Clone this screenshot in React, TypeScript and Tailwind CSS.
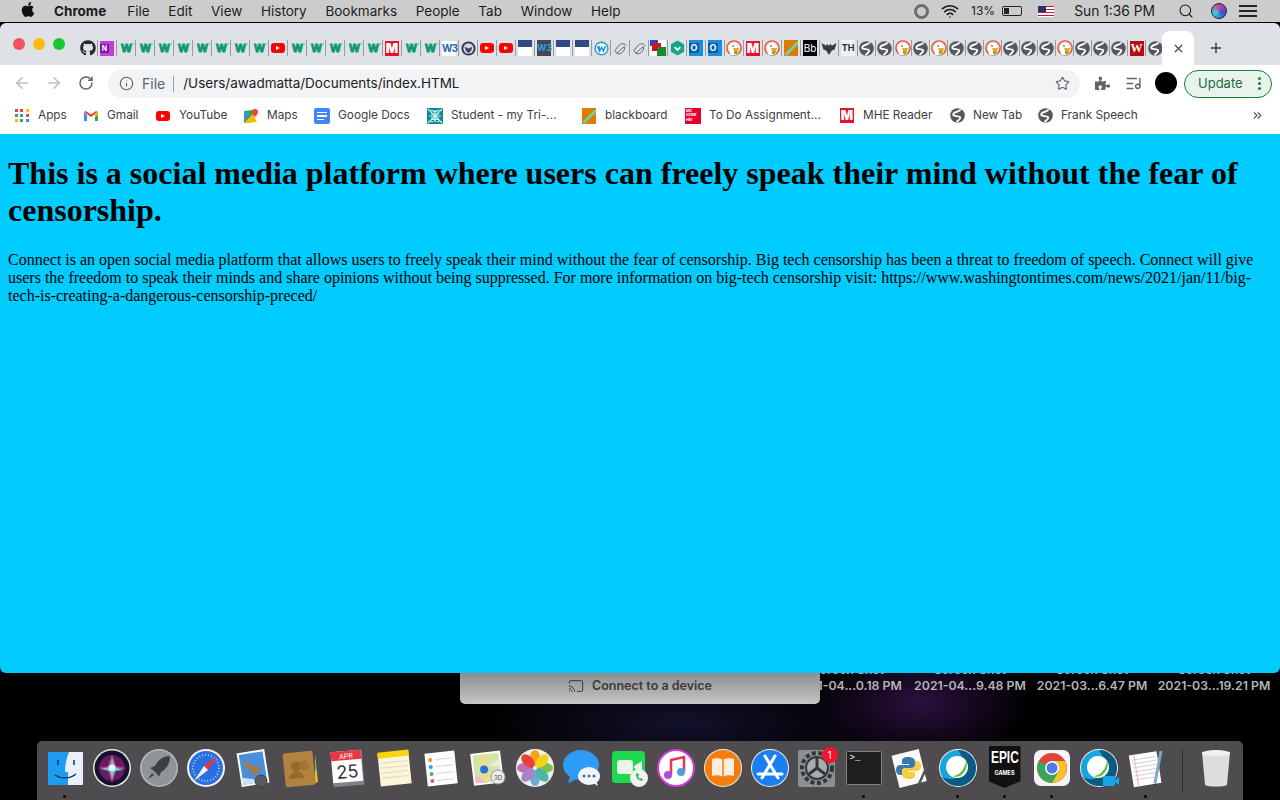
import { ArrowLeft, ArrowRight, Cast, ChevronsRight, Info, ListMusic, Plus, RotateCw, Search, Star, Wifi, X } from "lucide-react";
import { FaApple, FaGithub, FaPuzzlePiece } from "react-icons/fa";

type FaviconKind =
  | "github" | "onenote" | "w" | "yt" | "m" | "w3" | "seal" | "card" | "w3dark" | "wp" | "link"
  | "redbox" | "shield" | "outlook" | "ddg" | "pencil" | "bb" | "bird" | "th" | "globe" | "redw";

const Globe = () => (
  <svg viewBox="0 0 16 16" className="w-[15px] h-[15px]">
    <circle cx="8" cy="8" r="7.8" fill="#55585c" />
    <path d="M11.500 1.500C10 4.500 4.500 3.500 3.500 6.500S9 8 10.500 9.500 9 13 7 15" fill="none" stroke="#fff" strokeWidth="2" />
  </svg>
);

const Duck = () => (
  <svg viewBox="0 0 16 16" className="w-[16px] h-[16px]">
    <circle cx="8" cy="8" r="7.8" fill="#e2502c" />
    <circle cx="8" cy="8" r="6.400" fill="#fbe4dc" />
    <path d="M4 14.500c-1-4-1-7.500 0-9.500s6-3 7-1 1 3 0 5l1 4.500c-3 2-5 2-8 1z" fill="#fff" />
    <circle cx="7" cy="6" r=".8" fill="#234" />
    <path d="M7 8h6l-1 3H8z" fill="#f5a623" />
    <path d="M8 11h4l-1 3H8z" fill="#65bc46" />
  </svg>
);

const Card = () => (
  <div className="w-[14px] h-[16px] bg-white flex flex-col">
    <div className="h-[7px] bg-[#2f4a86]" />
  </div>
);

const Favicon = ({ kind }: { kind: FaviconKind }) => {
  switch (kind) {
    case "github":
      return <FaGithub className="w-[16px] h-[16px] text-[#24292e]" />;
    case "onenote":
      return (
        <div className="w-[14px] h-[15px] bg-[#c43ed6] flex items-center">
          <span className="w-[9px] h-[9px] bg-[#7719aa] text-white text-[7px] font-bold leading-[9px] text-center">N</span>
        </div>
      );
    case "w":
      return (
        <div className="relative w-[15px] h-[16px] flex items-center justify-center">
          <span className="text-[#0c9a6c] text-[11px] leading-[16px] font-black [font-family:'Liberation_Sans',sans-serif] tracking-[-1px] [-webkit-text-stroke:1px_#0c9a6c]">W</span>
          <i className="absolute right-0 top-[3px] w-[2px] h-[2px] bg-[#8fd6b8]" />
        </div>
      );
    case "yt":
      return <div className="w-[14px] h-[10px] rounded-[3px] bg-[#f00] flex items-center justify-center"><div className="w-0 h-0 border-y-[2.5px] border-y-transparent border-l-[4px] border-l-white" /></div>;
    case "m":
      return <div className="w-[14px] h-[15px] bg-[#e8112d] text-white text-[13px] leading-[15px] font-black text-center">M</div>;
    case "w3":
      return <div className="w-[14px] h-[15px] bg-white text-[#2565ae] text-[10px] leading-[15px] font-bold text-center tracking-[-1px]">W3</div>;
    case "seal":
      return (
        <svg viewBox="0 0 16 16" className="w-[15px] h-[15px]">
          <circle cx="8" cy="8" r="7.500" fill="#2c3550" />
          <circle cx="8" cy="8" r="5.500" fill="#d5d8de" />
          <path d="M4 6l4 2 4-2-1 4-3 3-3-3z" fill="#3b4564" />
        </svg>
      );
    case "card":
      return <Card />;
    case "w3dark":
      return <div className="w-[14px] h-[16px] bg-[#3d4a5c] text-[#3f9bd8] text-[9px] leading-[16px] font-bold text-center">W3</div>;
    case "wp":
      return (
        <svg viewBox="0 0 16 16" className="w-[15px] h-[15px]">
          <circle cx="8" cy="8" r="7.500" fill="#1f9ad6" />
          <circle cx="8" cy="8" r="6" fill="#fff" />
          <path d="M3 6l3 7 2-5 2 5 3-8-2 .5-1 3-2-3.500-1 3-1-3z" fill="#1f9ad6" />
        </svg>
      );
    case "link":
      return (
        <svg viewBox="0 0 16 16" className="w-[15px] h-[15px]" fill="none" stroke="#4d6470" strokeWidth="1">
          <path d="M2 10l5-6c2-2 6-1 7 1M4 13l8-7c1 2 0 4-2 6s-4 2-6 1zM2 10c0 1 1 2 2 3" />
        </svg>
      );
    case "redbox":
      return (
        <div className="w-[16px] h-[16px] bg-white relative overflow-hidden">
          <div className="w-[8px] h-[6px] bg-[#2448c4]" />
          <div className="absolute left-[2px] top-[3px] w-[9px] h-[8px] bg-[#d5121e]" />
          <div className="absolute right-0 bottom-0 w-[9px] h-[9px] bg-[#1a8a2e]" />
        </div>
      );
    case "shield":
      return (
        <svg viewBox="0 0 16 16" className="w-[15px] h-[16px]">
          <path d="M8 0l7 4v8l-7 4-7-4V4z" fill="#12a886" />
          <path d="M5 7l3 3 3-3" fill="none" stroke="#fff" strokeWidth="2" />
        </svg>
      );
    case "outlook":
      return (
        <div className="w-[14px] h-[16px] bg-[#1490df] relative">
          <span className="absolute left-0 top-[3px] w-[10px] h-[10px] bg-[#0a5ca8] text-white text-[9px] leading-[10px] font-bold text-center">O</span>
        </div>
      );
    case "ddg":
      return <Duck />;
    case "pencil":
      return (
        <div className="w-[14px] h-[16px] bg-[#e07b00] relative overflow-hidden">
          <div className="absolute left-[-1px] top-[7px] w-[18px] h-[3px] bg-[#6fd0a0] rotate-[-45deg]" />
        </div>
      );
    case "bb":
      return <div className="w-[14px] h-[16px] bg-black text-white text-[10px] leading-[16px] text-center">Bb</div>;
    case "bird":
      return (
        <svg viewBox="0 0 16 16" className="w-[16px] h-[15px]">
          <path d="M0 2l5 3 1-2 2 2 2-2 1 2 5-3-2 7-3 1-3 5-3-5-3-1z" fill="#3a3a3a" />
        </svg>
      );
    case "th":
      return <div className="w-[14px] h-[16px] bg-[#f1f1f1] text-[#2a2a2a] text-[9px] leading-[16px] font-bold text-center">TH</div>;
    case "globe":
      return <Globe />;
    case "redw":
      return <div className="w-[14px] h-[15px] bg-[#b80c0c] text-white text-[12px] leading-[15px] font-bold text-center [font-family:'Liberation_Serif',serif]">W</div>;
  }
};

const leftTabs: FaviconKind[] = [
  "github", "onenote", "w", "w", "w", "w", "w", "w", "w", "w", "yt", "w", "w", "w", "w", "w", "m", "w", "w",
  "w3", "seal", "yt", "yt", "card", "w3dark", "card", "card", "wp", "link", "link", "redbox", "shield",
  "outlook", "outlook", "ddg", "m", "ddg", "pencil", "bb", "bird", "th",
];

const rightTabs: FaviconKind[] = [
  "globe", "globe", "ddg", "globe", "ddg", "globe", "globe", "ddg", "globe", "globe", "globe", "ddg",
  "globe", "globe", "globe", "redw", "globe",
];

const GmailIcon = () => (
  <svg viewBox="0 0 16 16" className="w-[16px] h-[16px]">
    <path d="M1 4v9h3V7z" fill="#4285f4" />
    <path d="M15 4v9h-3V7z" fill="#34a853" />
    <path d="M1 4l7 5 7-5-2-1-5 3.500L3 3z" fill="#ea4335" />
    <path d="M15 4v3l-3 2V5z" fill="#fbbc04" />
  </svg>
);

const MapsIcon = () => (
  <svg viewBox="0 0 16 16" className="w-[16px] h-[16px]">
    <path d="M1 3l9-1v12l-9 1z" fill="#34a853" />
    <path d="M1 15L10 6l4 8z" fill="#fbbc04" />
    <path d="M1 3l5 5-5 5z" fill="#4285f4" />
    <path d="M12 1a3 3 0 013 3c0 2-3 5-3 5S9 6 9 4a3 3 0 013-3z" fill="#ea4335" />
  </svg>
);

const DocsIcon = () => (
  <div className="w-[16px] h-[16px] rounded-[2px] bg-[#4285f4] flex flex-col gap-[2px] px-[3px] pt-[4px]">
    <div className="h-[1.500px] bg-white" />
    <div className="h-[1.500px] bg-white" />
    <div className="h-[1.500px] w-[7px] bg-white" />
  </div>
);

const AppsIcon = () => (
  <div className="grid grid-cols-3 gap-[2px] w-[14px]">
    <i className="w-[3px] h-[3px] bg-[#ea4335]" />
    <i className="w-[3px] h-[3px] bg-[#ea4335]" />
    <i className="w-[3px] h-[3px] bg-[#fbbc04]" />
    <i className="w-[3px] h-[3px] bg-[#34a853]" />
    <i className="w-[3px] h-[3px] bg-[#4285f4]" />
    <i className="w-[3px] h-[3px] bg-[#ea4335]" />
    <i className="w-[3px] h-[3px] bg-[#fbbc04]" />
    <i className="w-[3px] h-[3px] bg-[#34a853]" />
    <i className="w-[3px] h-[3px] bg-[#4285f4]" />
  </div>
);

const StudentIcon = () => (
  <svg viewBox="0 0 16 16" className="w-[16px] h-[16px]">
    <rect width="16" height="16" fill="#0f8a94" />
    <path d="M1 1l14 14M15 1L1 15M8 2v12M2 8h12M4 2l8 4M12 2L4 6M4 14l8-4M12 14l-8-4" stroke="#cdeff2" strokeWidth="1.200" />
  </svg>
);

const McGrawIcon = () => (
  <div className="w-[16px] h-[16px] bg-[#e4002b] text-white text-[4px] leading-[4.500px] font-bold pl-[1px] pt-[1px]">
    Mc<br />Graw<br />Hill
  </div>
);

const bookmarks = [
  { label: "Apps", icon: <AppsIcon />, width: "w-[29px]" },
  { label: "Gmail", icon: <GmailIcon />, width: "w-[32px]" },
  { label: "YouTube", icon: <Favicon kind="yt" />, width: "w-[48px]" },
  { label: "Maps", icon: <MapsIcon />, width: "w-[31px]" },
  { label: "Google Docs", icon: <DocsIcon />, width: "w-[73px]" },
  { label: "Student - my Tri-...", icon: <StudentIcon />, width: "w-[114px]" },
  { label: "blackboard", icon: <Favicon kind="pencil" />, width: "w-[64px]" },
  { label: "To Do Assignment...", icon: <McGrawIcon />, width: "w-[114px]" },
  { label: "MHE Reader", icon: <Favicon kind="m" />, width: "w-[70px]" },
  { label: "New Tab", icon: <Globe />, width: "w-[48px]" },
  { label: "Frank Speech", icon: <Globe />, width: "w-[78px]" },
];

const menus = ["File", "Edit", "View", "History", "Bookmarks", "People", "Tab", "Window", "Help"];

const desktopFiles = ["2021-04...0.18 PM", "2021-04...9.48 PM", "2021-03...6.47 PM", "2021-03...19.21 PM"];

const dockSvg = "w-[40px] h-[40px]";

const dockIcons: { name: string; running?: boolean; art: React.ReactNode }[] = [
  {
    name: "Finder",
    running: true,
    art: (
      <svg viewBox="0 0 40 40" className={dockSvg}>
        <rect x="3" y="4" width="35" height="33" rx="1" fill="#e8f1f9" />
        <path d="M4 4h20c-3 7-4 14-4 20h3v13H4a1 1 0 01-1-1V5a1 1 0 011-1z" fill="#1c9bf0" />
        <path d="M13 12v5M29 12v5" stroke="#15304f" strokeWidth="1.500" />
        <path d="M10 27c6 4 15 4 21-1" fill="none" stroke="#15304f" strokeWidth="1.200" />
      </svg>
    ),
  },
  {
    name: "Siri",
    art: (
      <svg viewBox="0 0 40 40" className={dockSvg}>
        <circle cx="20" cy="20" r="19" fill="#e8e8e8" />
        <circle cx="20" cy="20" r="17.500" fill="#12122a" />
        <circle cx="20" cy="20" r="13" fill="#8e1f78" opacity=".7" />
        <path d="M20 6l4 12 10 2-10 3-4 12-4-12-10-3 10-2z" fill="#c8389f" />
        <path d="M20 10l3 9 8 3-8 1-3 8-2-8-9-2 9-2z" fill="#4fd6d2" />
        <circle cx="20" cy="20" r="3.500" fill="#e7f4ff" />
      </svg>
    ),
  },
  {
    name: "Launchpad",
    art: (
      <svg viewBox="0 0 40 40" className={dockSvg}>
        <circle cx="20" cy="20" r="19" fill="#b4b8bb" />
        <circle cx="20" cy="20" r="17.500" fill="#8f9498" />
        <path d="M31 8c-7 0-12 4-15 10l-5 2 3 2 4 4 2 3 2-5c6-3 9-9 9-16z" fill="#3c3f43" />
        <path d="M13 25l-4 6 6-4z" fill="#3c3f43" />
      </svg>
    ),
  },
  {
    name: "Safari",
    art: (
      <svg viewBox="0 0 40 40" className={dockSvg}>
        <circle cx="20" cy="20" r="19" fill="#f2f2f2" />
        <circle cx="20" cy="20" r="17" fill="#2a6fe0" />
        <circle cx="20" cy="20" r="13" fill="none" stroke="#a6c8f5" strokeWidth="2" strokeDasharray="1 2" />
        <path d="M32 7L18 18l4 4z" fill="#f0313c" />
        <path d="M8 33l10-15 4 4z" fill="#f4f4f4" />
      </svg>
    ),
  },
  {
    name: "Mail",
    art: (
      <svg viewBox="0 0 40 40" className={dockSvg}>
        <g transform="rotate(-9 20 20)">
          <rect x="6" y="3" width="28" height="34" fill="#fff" />
          <rect x="8" y="5" width="24" height="30" fill="#4b8fdc" />
          <path d="M8 28l24 7H8z" fill="#cfe2f6" />
          <path d="M12 10l8 8 10 3-6 3-2 6-4-7-5-4z" fill="#a07c42" />
        </g>
        <circle cx="28" cy="33" r="6" fill="#5c5a5e" stroke="#3e3c40" />
      </svg>
    ),
  },
  {
    name: "Contacts",
    art: (
      <svg viewBox="0 0 40 40" className={dockSvg}>
        <path d="M35 6l3 28-3 1z" fill="#e6c02f" />
        <path d="M35 14l2 8-2 0z" fill="#4fb56a" />
        <g transform="rotate(-6 20 20)">
          <rect x="4" y="4" width="30" height="34" rx="2" fill="#b3823f" />
          <circle cx="16" cy="18" r="5" fill="#96692e" />
          <circle cx="24" cy="18" r="5" fill="#a27434" />
          <path d="M8 30c1-5 4-7 8-7s6 2 7 7z" fill="#96692e" />
        </g>
      </svg>
    ),
  },
  {
    name: "Calendar",
    art: (
      <svg viewBox="0 0 40 40" className={dockSvg}>
        <g transform="rotate(-5 20 20)">
          <rect x="5" y="4" width="31" height="34" fill="#7c8489" />
          <rect x="5" y="3" width="30" height="31" fill="#fff" />
          <rect x="5" y="3" width="30" height="9" fill="#ea3540" />
          <text x="20" y="10.500" textAnchor="middle" fontSize="7" fill="#fff" fontFamily="Inter, sans-serif">APR</text>
          <text x="20" y="30" textAnchor="middle" fontSize="18" fill="#333" fontFamily="Inter, sans-serif">25</text>
        </g>
      </svg>
    ),
  },
  {
    name: "Notes",
    art: (
      <svg viewBox="0 0 40 40" className={dockSvg}>
        <g transform="rotate(-6 20 20)">
          <rect x="5" y="4" width="31" height="33" fill="#fbf6d8" />
          <rect x="5" y="3" width="31" height="6" fill="#fbd40a" />
          <path d="M7 14h27M7 19h27M7 24h27M7 29h27" stroke="#dfd9bb" />
        </g>
      </svg>
    ),
  },
  {
    name: "Reminders",
    art: (
      <svg viewBox="0 0 40 40" className={dockSvg}>
        <g transform="rotate(-6 20 20)">
          <rect x="5" y="4" width="30" height="33" fill="#fff" />
          <circle cx="10" cy="11" r="2" fill="#f5921e" />
          <circle cx="10" cy="18" r="2" fill="#1ca7f0" />
          <circle cx="10" cy="25" r="2" fill="#3bc14a" />
          <circle cx="10" cy="32" r="2" fill="#c64fd2" />
          <path d="M15 11h17M15 18h17M15 25h17M15 32h17" stroke="#d5d5d5" />
        </g>
      </svg>
    ),
  },
  {
    name: "Maps",
    art: (
      <svg viewBox="0 0 40 40" className={dockSvg}>
        <g transform="rotate(-7 20 20)">
          <rect x="4" y="4" width="30" height="32" fill="#fff" />
          <rect x="6" y="6" width="26" height="28" fill="#cfe6a8" />
          <path d="M14 6h6v28h-6z" fill="#f6d987" />
          <path d="M6 24l10 10H6z" fill="#f4b8c8" />
          <path d="M20 18l12-6v8z" fill="#eee8dc" />
          <circle cx="16" cy="21" r="4" fill="#2a6fe0" />
        </g>
        <circle cx="30" cy="29" r="7" fill="#ececec" stroke="#9b9b9b" />
        <text x="30" y="31.500" textAnchor="middle" fontSize="6.500" fill="#555" fontFamily="Inter, sans-serif">3D</text>
      </svg>
    ),
  },
  {
    name: "Photos",
    art: (
      <svg viewBox="0 0 40 40" className={dockSvg}>
        <circle cx="20" cy="20" r="19" fill="#efefef" />
        <ellipse cx="20" cy="10" rx="5" ry="8" fill="#f7a21b" />
        <ellipse cx="20" cy="30" rx="5" ry="8" fill="#6ea9dd" />
        <ellipse cx="10" cy="20" rx="8" ry="5" fill="#c36bb5" />
        <ellipse cx="30" cy="20" rx="8" ry="5" fill="#7dc244" />
        <ellipse cx="13" cy="13" rx="5" ry="8" transform="rotate(-45 13 13)" fill="#e8413c" />
        <ellipse cx="27" cy="13" rx="5" ry="8" transform="rotate(45 27 13)" fill="#f3d21a" />
        <ellipse cx="13" cy="27" rx="5" ry="8" transform="rotate(45 13 27)" fill="#a983c9" />
        <ellipse cx="27" cy="27" rx="5" ry="8" transform="rotate(-45 27 27)" fill="#4fb6a6" />
      </svg>
    ),
  },
  {
    name: "Messages",
    art: (
      <svg viewBox="0 0 40 40" className={dockSvg}>
        <ellipse cx="19" cy="17" rx="18" ry="15" fill="#2d9cf5" />
        <path d="M8 28l-2 7 9-4z" fill="#2d9cf5" />
        <ellipse cx="27" cy="28" rx="11" ry="9" fill="#f1f4fa" />
        <path d="M31 35l5 3-2-6z" fill="#f1f4fa" />
        <circle cx="22" cy="28" r="1.500" fill="#3b6fb5" />
        <circle cx="27" cy="28" r="1.500" fill="#3b6fb5" />
        <circle cx="32" cy="28" r="1.500" fill="#3b6fb5" />
      </svg>
    ),
  },
  {
    name: "FaceTime",
    art: (
      <svg viewBox="0 0 40 40" className={dockSvg}>
        <rect x="3" y="3" width="33" height="32" rx="4" fill="#1ed94f" />
        <rect x="8" y="12" width="16" height="14" rx="3" fill="#e8f5e8" />
        <path d="M25 18l8-5v12l-8-5z" fill="#e8f5e8" />
        <circle cx="30" cy="30" r="9" fill="#f1f1f1" />
        <path d="M27 26c0 4 2 6 6 7l1-2-2-1-1 1c-1-1-2-2-2-3l1-1-1-2z" fill="#22c14b" />
      </svg>
    ),
  },
  {
    name: "Music",
    art: (
      <svg viewBox="0 0 40 40" className={dockSvg}>
        <circle cx="20" cy="20" r="18" fill="#fff" stroke="#d23ad6" strokeWidth="2" />
        <path d="M15 27V12l13-3v15" fill="none" stroke="#e8345a" strokeWidth="2.500" />
        <circle cx="12" cy="27" r="4" fill="#a64fd6" />
        <circle cx="25" cy="24" r="4" fill="#4f9ee0" />
      </svg>
    ),
  },
  {
    name: "Books",
    art: (
      <svg viewBox="0 0 40 40" className={dockSvg}>
        <circle cx="20" cy="20" r="19" fill="#f0f0f0" />
        <circle cx="20" cy="20" r="18" fill="#f47d0e" />
        <path d="M20 12c-3-2-7-2-11-1v17c4-1 8-1 11 1 3-2 7-2 11-1V11c-4-1-8-1-11 1z" fill="#fbeedd" />
        <path d="M20 12v17" stroke="#f47d0e" strokeWidth="1.500" />
      </svg>
    ),
  },
  {
    name: "App Store",
    art: (
      <svg viewBox="0 0 40 40" className={dockSvg}>
        <circle cx="20" cy="20" r="19" fill="#f0f0f0" />
        <circle cx="20" cy="20" r="18" fill="#1a80f0" />
        <path d="M25 8L12 30M15 8l13 22M8 26h24" stroke="#fff" strokeWidth="3" strokeLinecap="round" fill="none" />
      </svg>
    ),
  },
  {
    name: "System Preferences",
    art: (
      <div className="relative w-[40px] h-[40px]">
        <svg viewBox="0 0 40 40" className={dockSvg}>
          <rect x="1" y="2" width="37" height="37" rx="2" fill="#8d9093" />
          <circle cx="20" cy="20" r="15" fill="none" stroke="#34373a" strokeWidth="4" strokeDasharray="4 2.500" />
          <circle cx="20" cy="20" r="11" fill="#a9acae" stroke="#34373a" strokeWidth="2" />
          <path d="M20 20V10M20 20l-8 6M20 20l8 6" stroke="#34373a" strokeWidth="3" />
        </svg>
        <span className="absolute right-[-1px] top-[-1px] w-[16px] h-[16px] rounded-full bg-[#f0152e] text-white text-[10px] leading-[16px] text-center">1</span>
      </div>
    ),
  },
  {
    name: "Terminal",
    running: true,
    art: (
      <div className="w-[36px] h-[34px] rounded-[2px] bg-[#1e1e1e] border border-[#7d8285] text-white text-[9px] leading-[12px] pl-[3px] [font-family:'Liberation_Mono',monospace]">&gt;_</div>
    ),
  },
  {
    name: "Python",
    art: (
      <svg viewBox="0 0 40 40" className={dockSvg}>
        <g transform="rotate(-14 18 20)">
          <rect x="4" y="4" width="28" height="33" fill="#fafafa" />
        </g>
        <path d="M17 9c-5 0-6 2-6 4v3h7v1H9c-3 0-4 3-4 5s1 5 4 5h2v-4c0-2 2-3 4-3h6c2 0 3-1 3-3v-4c0-2-3-4-7-4z" fill="#3b78ae" />
        <path d="M18 31c5 0 6-2 6-4v-3h-7v-1h9c3 0 4-3 4-5s-1-5-4-5h-2v4c0 2-2 3-4 3h-6c-2 0-3 1-3 3v4c0 2 3 4 7 4z" fill="#f6cf3f" />
        <path d="M37 16L28 36" stroke="#555" strokeWidth="2.500" />
      </svg>
    ),
  },
  {
    name: "Webex",
    running: true,
    art: (
      <svg viewBox="0 0 40 40" className={dockSvg}>
        <circle cx="20" cy="20" r="19" fill="#f0f0f0" />
        <circle cx="20" cy="20" r="18" fill="#14a6e0" />
        <path d="M20 2a18 18 0 010 36c-7 0-13-4-16-9 8 4 16 2 20-4s2-14-4-23z" fill="#0d5a80" />
        <circle cx="19" cy="19" r="11" fill="#fff" />
        <path d="M28 12c2 6 0 12-6 16-3 1-5 1-8 0 7 0 13-6 14-16z" fill="#58c13b" />
      </svg>
    ),
  },
  {
    name: "Epic Games",
    running: true,
    art: (
      <div className="w-[32px] h-[42px] bg-[#111] text-white text-center flex flex-col items-center mt-[-2px] [clip-path:polygon(0_0,100%_0,100%_84%,50%_100%,0_84%)]">
        <span className="text-[17px] leading-[19px] pt-[2px] font-bold [font-family:'Liberation_Sans',sans-serif] scale-x-[.7]">EPIC</span>
        <span className="text-[5.500px] leading-[9px] mt-[2px] font-bold">GAMES</span>
      </div>
    ),
  },
  {
    name: "Chrome",
    running: true,
    art: (
      <svg viewBox="0 0 40 40" className={dockSvg}>
        <rect x="2" y="2" width="36" height="36" rx="7" fill="#f5f5f5" />
        <circle cx="20" cy="20" r="15" fill="#db4437" />
        <path d="M20 35a15 15 0 0013-22H20l-8 14z" fill="#fbc02d" />
        <path d="M20 35l7-12-8-4L7 13a15 15 0 0013 22z" fill="#3aa757" />
        <circle cx="20" cy="20" r="7" fill="#fff" />
        <circle cx="20" cy="20" r="5.500" fill="#4c7ae8" />
      </svg>
    ),
  },
  {
    name: "Webex Meetings",
    art: (
      <div className="relative w-[40px] h-[40px]">
        <svg viewBox="0 0 40 40" className={dockSvg}>
          <circle cx="20" cy="20" r="19" fill="#f0f0f0" />
          <circle cx="20" cy="20" r="18" fill="#14a6e0" />
          <path d="M20 2a18 18 0 010 36c-7 0-13-4-16-9 8 4 16 2 20-4s2-14-4-23z" fill="#0d5a80" />
          <circle cx="19" cy="19" r="11" fill="#fff" />
          <path d="M28 12c2 6 0 12-6 16-3 1-5 1-8 0 7 0 13-6 14-16z" fill="#58c13b" />
          <rect x="24" y="28" width="12" height="10" rx="2" fill="#12a7ea" />
          <path d="M36 32l4-3v8l-4-3z" fill="#12a7ea" />
        </svg>
      </div>
    ),
  },
  {
    name: "TextEdit",
    running: true,
    art: (
      <svg viewBox="0 0 40 40" className={dockSvg}>
        <g transform="rotate(-9 20 20)">
          <rect x="5" y="5" width="28" height="32" fill="#fff" />
          <path d="M7 10h24M7 14h24M7 18h24M7 22h24M7 26h24M7 30h24" stroke="#cfcfcf" />
          <path d="M10 5v32" stroke="#efb4b4" />
        </g>
        <path d="M35 3l-6 32" stroke="#7fa6c9" strokeWidth="3" />
        <path d="M29 35l-1 3 2-2z" fill="#333" />
      </svg>
    ),
  },
];

const App = () => {
  return (
    <div className="relative w-[1280px] h-[800px] overflow-hidden flex flex-col bg-black [font-family:Inter,'Liberation_Sans',sans-serif]">
      {/* macOS menu bar */}
      <div className="h-[23px] shrink-0 flex items-center bg-[#cdcccd] text-[#1b1b1b] text-[13.5px] pl-[20px] pr-[23px] border-b border-black">
        <FaApple className="w-[16px] h-[17px] text-[#111] mb-[3px] mr-[18px]" />
        <span className="font-bold mr-[21px]">Chrome</span>
        <div className="flex gap-[18.700px]">
          {menus.map((m) => (
            <span key={m}>{m}</span>
          ))}
        </div>
        <div className="ml-auto flex items-center">
          <div className="w-[15px] h-[15px] rounded-full border-[3px] border-[#6d6d6d]" />
          <Wifi className="w-[18px] h-[18px] ml-[12px] text-[#1b1b1b]" strokeWidth={2.2} />
          <span className="ml-[12px] text-[12px]">13%</span>
          <div className="ml-[7px] w-[20px] h-[10px] border border-[#222] rounded-[2px] p-[1px]">
            <div className="w-[5px] h-full bg-[#222]" />
          </div>
          <div className="ml-[16px] w-[16px] h-[11px] bg-[repeating-linear-gradient(#b22234_0_1.5px,#fff_1.5px_3px)] relative">
            <div className="absolute left-0 top-0 w-[8px] h-[6px] bg-[#2b2f6b]" />
          </div>
          <span className="ml-[20px] text-[13.8px]">Sun 1:36 PM</span>
          <Search className="w-[16px] h-[16px] ml-[23px]" strokeWidth={1.6} />
          <div className="ml-[17px] w-[16px] h-[16px] rounded-full bg-[conic-gradient(#d33aa0,#3b4fd8,#2dd6d0,#d33aa0)] border border-[#222]" />
          <div className="ml-[12px] w-[18px] flex flex-col gap-[3px]">
            <div className="h-[2px] bg-[#222]" />
            <div className="h-[2px] bg-[#222]" />
            <div className="h-[2px] bg-[#222]" />
          </div>
        </div>
      </div>

      {/* Chrome window */}
      <div className="relative z-10 shrink-0 rounded-t-[6px] rounded-b-[6px] overflow-hidden">
        <div className="h-[42px] bg-[#dee1e6] flex items-end">
          <div className="flex items-center gap-[8px] pl-[13px] h-full w-[79px] pb-[1px]">
            <div className="w-[12px] h-[12px] rounded-full bg-[#f5515b]" />
            <div className="w-[12px] h-[12px] rounded-full bg-[#fcbb0b]" />
            <div className="w-[12px] h-[12px] rounded-full bg-[#1ac730]" />
          </div>
          <div className="flex h-[34px] items-center">
            {leftTabs.map((k, i) => (
              <div key={i} className="w-[19px] h-[16px] flex items-center justify-center border-r border-[#9a9ca0]">
                <Favicon kind={k} />
              </div>
            ))}
            {rightTabs.map((k, i) => (
              <div key={i} className="w-[18px] h-[16px] flex items-center justify-center border-r border-[#9a9ca0] last:border-r-0">
                <Favicon kind={k} />
              </div>
            ))}
          </div>
          <div className="ml-[-2px] w-[32px] h-[34px] bg-white rounded-t-[8px] flex items-center justify-center">
            <X className="w-[13px] h-[13px] text-[#45484c]" strokeWidth={2.4} />
          </div>
          <div className="ml-[6px] w-[32px] h-[34px] flex items-center justify-center">
            <Plus className="w-[16px] h-[16px] text-[#3d4043]" strokeWidth={2.2} />
          </div>
        </div>

        {/* toolbar */}
        <div className="h-[36px] bg-white flex items-center pl-[13px] pr-[6px]">
          <ArrowLeft className="w-[18px] h-[18px] text-[#bcbec1]" strokeWidth={2} />
          <ArrowRight className="w-[18px] h-[18px] ml-[14px] text-[#bcbec1]" strokeWidth={2} />
          <RotateCw className="w-[16px] h-[16px] ml-[15px] text-[#5f6368]" strokeWidth={2.2} />
          <div className="ml-[14px] w-[972px] h-[28px] mt-[1px] rounded-full bg-[#f1f3f4] flex items-center pl-[11px] pr-[10px]">
            <Info className="w-[15px] h-[15px] text-[#5f6368]" strokeWidth={1.8} />
            <span className="ml-[8px] text-[14px] text-[#5f6368]">File</span>
            <div className="ml-[8px] w-px h-[16px] bg-[#9aa0a6]" />
            <span className="ml-[9px] text-[13.5px] text-[#202124]">/Users/awadmatta/Documents/index.HTML</span>
            <Star className="ml-auto w-[15px] h-[15px] text-[#5f6368]" strokeWidth={1.8} />
          </div>
          <FaPuzzlePiece className="ml-[15px] w-[15px] h-[15px] text-[#5f6368]" />
          <ListMusic className="ml-[15px] w-[17px] h-[17px] text-[#5f6368]" strokeWidth={2} />
          <div className="ml-[13px] w-[22px] h-[22px] rounded-full bg-black" />
          <div className="ml-[7px] w-[88px] h-[28px] mt-[1px] rounded-full border border-[#188038] bg-[#e8f3ec] flex items-center pl-[13px] text-[13px] text-[#1c6b3a]">
            Update
            <div className="ml-auto mr-[10px] flex flex-col gap-[2px]">
              <i className="w-[3px] h-[3px] rounded-full bg-[#188038]" />
              <i className="w-[3px] h-[3px] rounded-full bg-[#188038]" />
              <i className="w-[3px] h-[3px] rounded-full bg-[#188038]" />
            </div>
          </div>
        </div>

        {/* bookmarks bar */}
        <div className="h-[33px] bg-white flex items-center pl-[14px] pr-[16px] pb-[4px] gap-[16px] text-[11.800px] text-[#3c4043]">
          {bookmarks.map((b) => (
            <div key={b.label} className="flex items-center gap-[8px]">
              <div className="w-[16px] flex items-center justify-center">{b.icon}</div>
              <span className={`${b.width} whitespace-nowrap`}>{b.label}</span>
            </div>
          ))}
          <ChevronsRight className="ml-auto w-[13px] h-[13px] text-[#5f6368]" strokeWidth={2.4} />
        </div>

        {/* the page itself */}
        <div className="h-[539px] bg-[#00ccff] text-black px-[8px] [font-family:'Liberation_Serif',serif]">
          <h1 className="pt-[21px] text-[32px] leading-[37px] font-bold">
            This is a social media platform where users can freely speak their mind without the fear of censorship.
          </h1>
          <p className="mt-[22px] text-[16px] leading-[18px]">
            Connect is an open social media platform that allows users to freely speak their mind without the fear of censorship. Big tech censorship has been a threat to freedom of speech. Connect will give users the freedom to speak their minds and share opinions without being suppressed. For more information on big-tech censorship visit: https://www.washingtontimes.com/news/2021/jan/11/big-tech-is-creating-a-dangerous-censorship-preced/
          </p>
        </div>
      </div>

      {/* desktop */}
      <div className="relative flex-1 flex flex-col bg-black bg-[radial-gradient(ellipse_110px_60px_at_920px_30px,#2c1040,transparent),radial-gradient(ellipse_200px_60px_at_680px_50px,#12112b,transparent)]">
        <div className="flex justify-end pr-[5px] mt-[-11px] text-[12.300px] font-semibold text-[#b5b3b5]">
          {desktopFiles.map((f) => (
            <div key={f} className="w-[122px] text-center leading-[16px] whitespace-nowrap">
              <div>Screen Shot</div>
              <div>{f}</div>
            </div>
          ))}
        </div>
        <div className="absolute left-[460px] top-0 w-[360px] h-[31px] rounded-b-[5px] bg-gradient-to-b from-[#8e8e8e] to-[#c6c6c6] flex items-center justify-center gap-[8px] pb-[5px] text-[12.500px] font-semibold text-[#3a3a3a]">
          <Cast className="w-[16px] h-[16px]" strokeWidth={1.5} />
          Connect to a device
        </div>

        {/* dock */}
        <div className="mt-auto ml-[37px] w-[1206px] h-[59px] rounded-t-[5px] bg-[#4f4c50] flex pl-[4px]">
          {dockIcons.map((d) => (
            <div key={d.name} className="w-[47px] h-full flex flex-col items-center pt-[7px]">
              <div className="h-[40px] flex items-center justify-center">{d.art}</div>
              {d.running && <div className="mt-[7px] w-[3px] h-[3px] rounded-full bg-black" />}
            </div>
          ))}
          <div className="ml-[13px] mt-[8px] w-px h-[44px] bg-[#2f2d30]" />
          <div className="ml-[9px] w-[47px] flex justify-center pt-[7px]">
            <svg viewBox="0 0 40 40" className={dockSvg}>
              <path d="M6 4h28l-3 33c-4 2-18 2-22 0z" fill="#dcdddd" />
              <ellipse cx="20" cy="5" rx="14" ry="3" fill="#f2f2f2" />
            </svg>
          </div>
        </div>
      </div>
    </div>
  );
};

export default App;
